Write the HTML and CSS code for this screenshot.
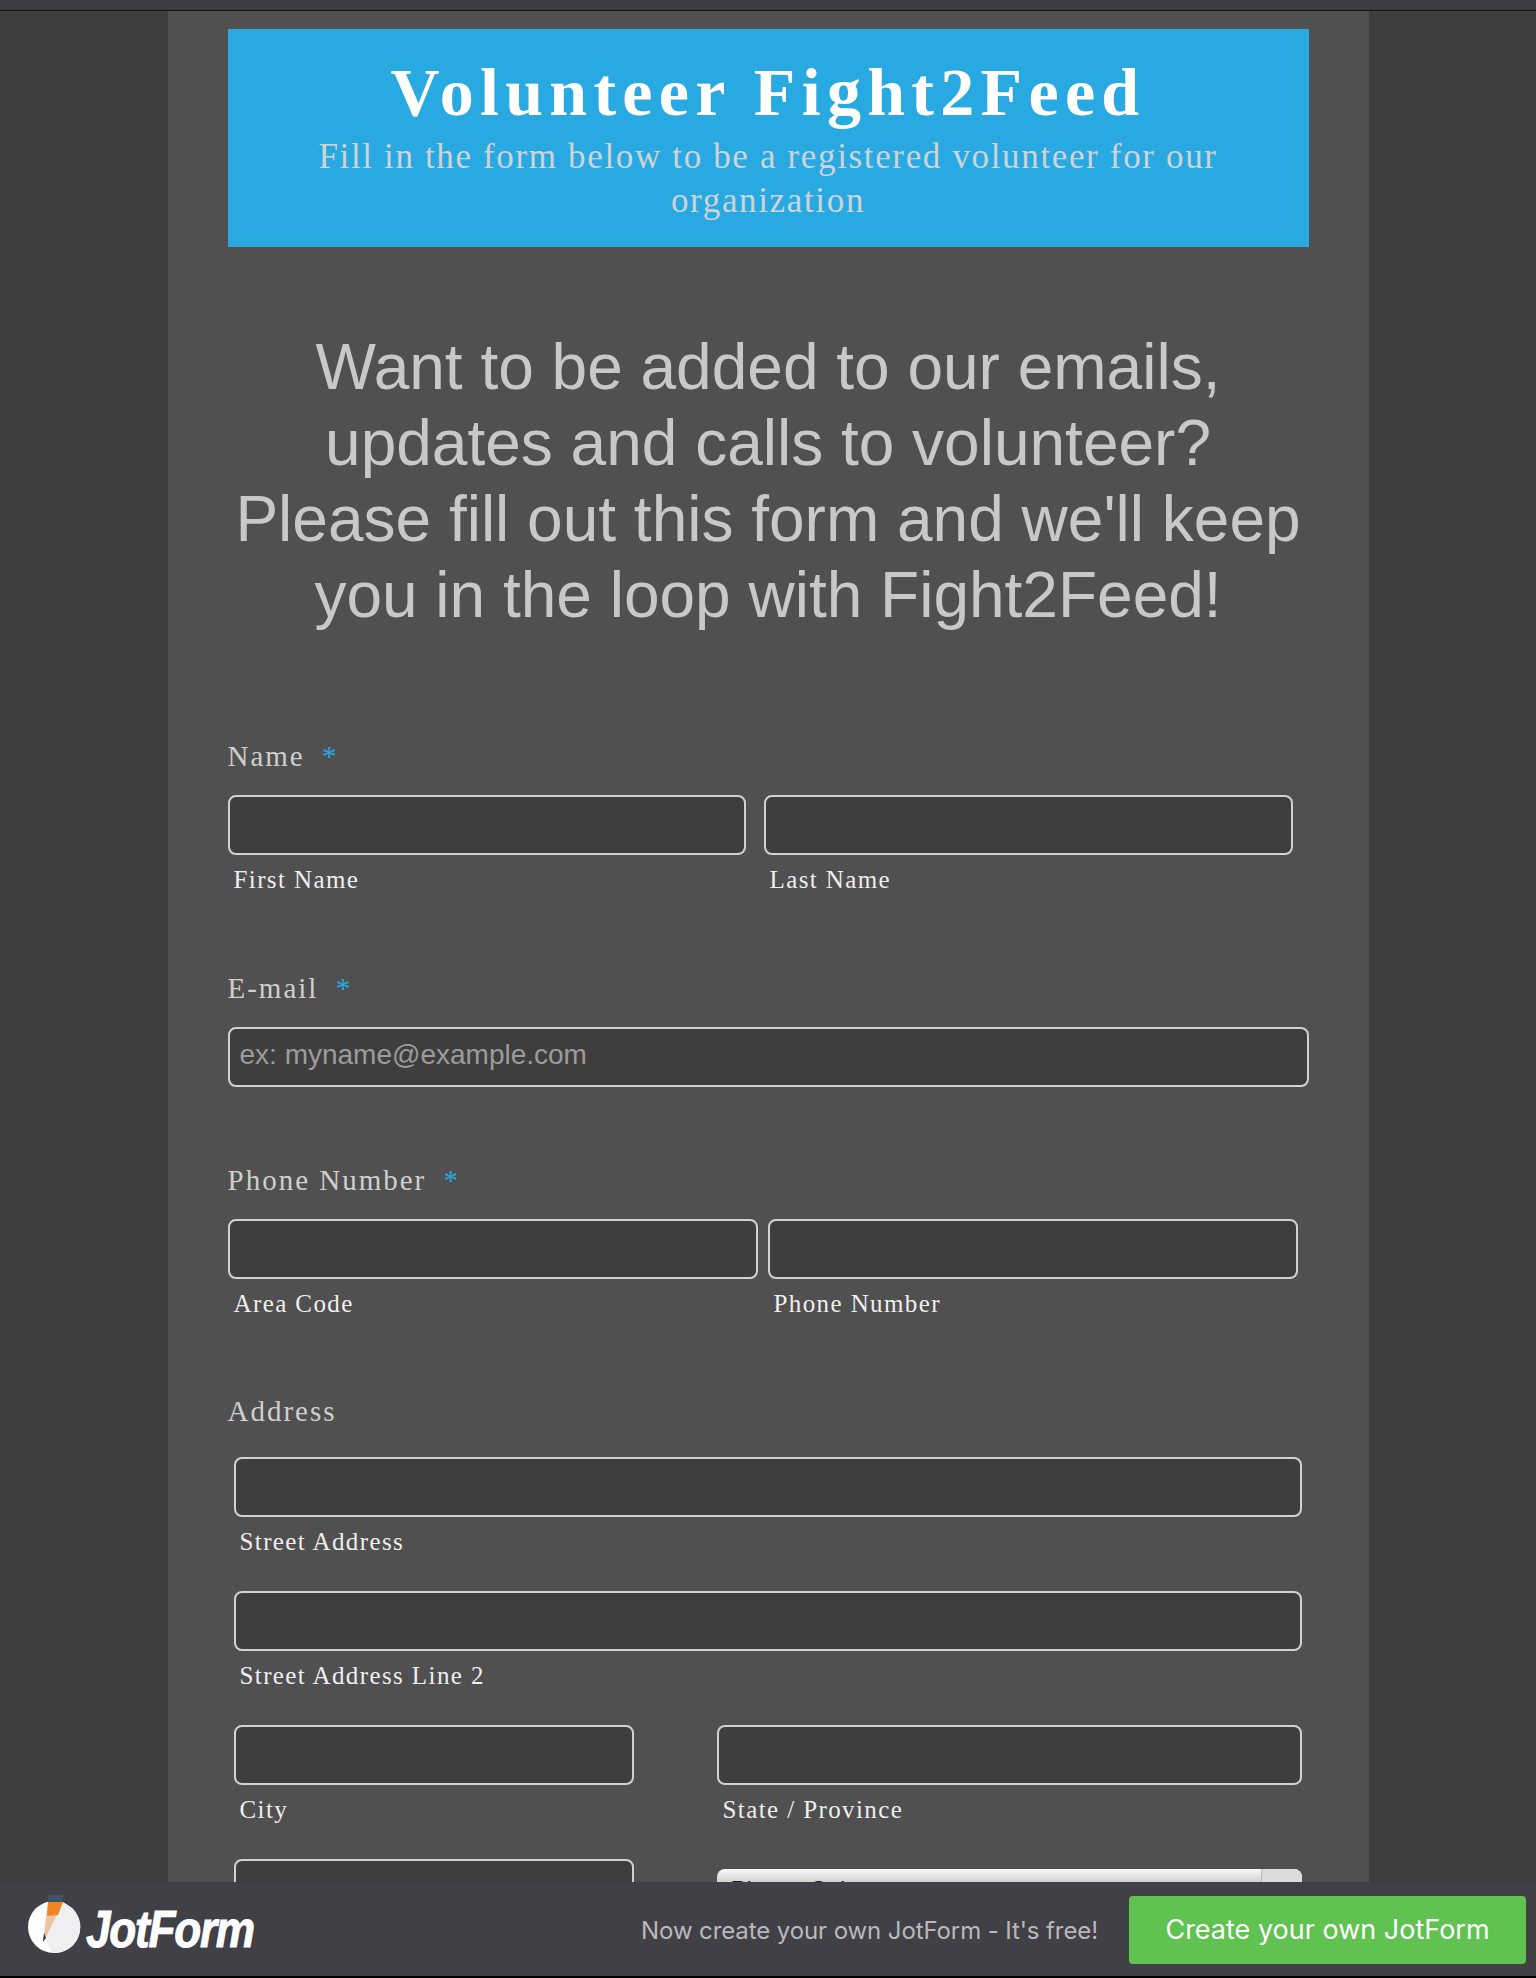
FILE: index.html
```html
<!DOCTYPE html>
<html lang="en">
<head>
  <meta charset="UTF-8">
  <meta name="viewport" content="width=device-width, initial-scale=1.0">
  <title>Volunteer Fight2Feed</title>
  <link rel="stylesheet" href="styles.css">
</head>
<body>

  <div class="top-strip"></div>

  <!-- Form -->
  <div class="form-all">
    <div class="form-header">
      <h1>Volunteer Fight2Feed</h1>
      <p>Fill in the form below to be a registered volunteer for our organization</p>
    </div>

    <p class="intro">Want to be added to our emails, updates and calls to volunteer? Please fill out this form and we'll keep you in the loop with Fight2Feed!</p>

    <div class="form-line line-name">
      <label class="form-label">Name <span class="req">*</span></label>
      <div class="inputs">
        <div class="field first-name"><input type="text"><span class="sub">First Name</span></div>
        <div class="field last-name"><input type="text"><span class="sub">Last Name</span></div>
      </div>
    </div>

    <div class="form-line line-email">
      <label class="form-label">E-mail <span class="req">*</span></label>
      <input type="text" class="email" placeholder="ex: myname@example.com">
    </div>

    <div class="form-line line-phone">
      <label class="form-label">Phone Number <span class="req">*</span></label>
      <div class="inputs">
        <div class="field area"><input type="text"><span class="sub">Area Code</span></div>
        <div class="field phone"><input type="text"><span class="sub">Phone Number</span></div>
      </div>
    </div>

    <div class="form-line line-address">
      <label class="form-label">Address</label>
      <div class="address">
        <div class="field wide"><input type="text"><span class="sub">Street Address</span></div>
        <div class="field wide"><input type="text"><span class="sub">Street Address Line 2</span></div>
        <div class="field"><input type="text"><span class="sub">City</span></div>
        <div class="field"><input type="text"><span class="sub">State / Province</span></div>
        <div class="field"><input type="text"></div>
        <div class="field"><div class="select-box">Please Select<span class="select-arrow"></span></div></div>
      </div>
    </div>
  </div>

  <!-- Bottom bar -->
  <div class="footer-bar">
    <a class="logo">
      <svg class="logo-icon" width="56" height="70" viewBox="0 0 56 70">
        <circle cx="28" cy="39" r="26" fill="#ffffff"/>
        <path d="M37 14 L20 52 L26 65 A26 26 0 0 0 46 20 Z" fill="#efeff1"/>
        <path d="M22 14 L37 14 L20 50 L17 53 Z" fill="#eec5a4"/>
        <path d="M22 14 L37 14 L32 27 L21 28 Z" fill="#ee8427"/>
        <path d="M22 7 L37 7 L37 14 L22 14 Z" fill="#3f5567"/>
        <path d="M18 45 L20 50 L17 54 Z" fill="#3a3a3a"/>
      </svg>
      <span class="logo-text">JotForm</span>
    </a>
    <span class="footer-note">Now create your own JotForm - It's free!</span>
    <a class="create-btn">Create your own JotForm</a>
  </div>

</body>
</html>
```

FILE: styles.css
```css
html, body {
  height: 100%;
}

body {
  margin: 0;
  height: 1978px;
  overflow: hidden;
  background-color: #3e3e3e;
  font-family: "Liberation Serif", serif;
}

.top-strip {
  height: 10px;
  background-color: #3b3b40;
  border-bottom: 1px solid #111;
}

/* Form */
.form-all {
  width: 1081px;
  height: 1967px;
  margin: 0 auto;
  padding: 18px 60px 0;
  background-color: #505050;
}

.form-header {
  height: 218px;
  padding-top: 28px;
  box-sizing: border-box;
  background-color: #29a9e1;
  text-align: center;
}

.form-header h1 {
  margin: 0;
  color: #fff;
  font-size: 68px;
  line-height: 70px;
  font-weight: bold;
  letter-spacing: 6.3px;
}

.form-header p {
  margin: 8px auto 0;
  width: 960px;
  color: #cfd3d6;
  font-size: 35px;
  line-height: 44px;
  letter-spacing: 1.65px;
}

.intro {
  margin: 82px 0 107px;
  color: #c8c8c8;
  font-family: "Liberation Sans", sans-serif;
  font-size: 64px;
  line-height: 76px;
  text-align: center;
}

.form-line {
  margin-bottom: 78px;
}

.line-name {
  margin-bottom: 79px;
}

.line-email {
  margin-bottom: 77px;
}

.form-label {
  display: block;
  color: #cfcfcf;
  font-size: 29px;
  line-height: 32px;
  letter-spacing: 2px;
  margin-bottom: 23px;
}

.req {
  margin-left: 8px;
  color: #29a9e1;
}

.inputs {
  display: flex;
}

.field {
  display: flex;
  flex-direction: column;
}

input {
  display: block;
  width: 100%;
  height: 60px;
  box-sizing: border-box;
  margin: 0;
  padding: 0 10px;
  background-color: #3e3e3e;
  border: 2px solid #d2d2d2;
  border-radius: 8px;
  outline: none;
}

.email {
  padding-bottom: 4px;
  font-family: "Liberation Sans", sans-serif;
  font-size: 28px;
}

.email::placeholder {
  color: #9c9c9c;
  opacity: 1;
}

.sub {
  margin-top: 12px;
  padding-left: 6px;
  color: #efefef;
  font-size: 25px;
  line-height: 26px;
  letter-spacing: 1.4px;
}

.first-name { width: 518px; margin-right: 18px; }
.last-name { width: 529px; }
.area { width: 530px; margin-right: 10px; }
.phone { width: 530px; }

.line-address .form-label {
  margin-bottom: 30px;
}

.address {
  display: grid;
  grid-template-columns: 400px 585px;
  column-gap: 83px;
  row-gap: 36px;
  padding: 0 7px 0 6px;
}

.wide {
  grid-column: 1 / 3;
}

.select-box {
  position: relative;
  margin-top: 10px;
  height: 50px;
  box-sizing: border-box;
  padding: 7px 14px;
  border-radius: 8px;
  background: linear-gradient(#fafafa, #cdcdcd 14px);
  color: #222;
  font-family: "Liberation Sans", sans-serif;
  font-size: 24px;
}

.select-arrow {
  position: absolute;
  top: 0;
  right: 0;
  width: 40px;
  height: 100%;
  border-radius: 0 8px 8px 0;
  border-left: 1px solid #bbb;
  background-color: #dcdcdc;
}

/* Bottom bar */
.footer-bar {
  position: fixed;
  left: 0;
  right: 0;
  bottom: 0;
  height: 94px;
  display: flex;
  align-items: center;
  background-color: #404046;
  border-bottom: 2px solid #000;
  font-family: "Inter", sans-serif;
}

.logo {
  display: flex;
  align-items: center;
  margin-left: 26px;
  margin-right: auto;
  height: 94px;
}

.logo-icon {
  margin-top: -12px;
  flex-shrink: 0;
}

.logo-text {
  margin-left: 4px;
  color: #fff;
  font-family: "Liberation Sans", sans-serif;
  font-size: 52px;
  font-weight: bold;
  font-style: italic;
  letter-spacing: -1.5px;
  -webkit-text-stroke: 1px #fff;
  transform: scaleX(.85);
  transform-origin: left center;
}

.footer-note {
  margin-right: 31px;
  margin-top: 2px;
  color: #b9b9bc;
  font-size: 24px;
  letter-spacing: -.1px;
}

.create-btn {
  width: 397px;
  height: 68px;
  margin-top: 2px;
  margin-right: 10px;
  border-radius: 4px;
  background-color: #60c251;
  color: #fff;
  font-size: 27px;
  line-height: 68px;
  text-align: center;
}
```
